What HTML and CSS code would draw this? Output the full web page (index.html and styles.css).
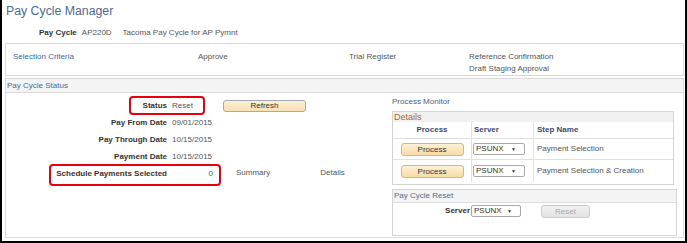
FILE: index.html
```html
<!doctype html>
<html lang="en">
<head>
	<meta charset="utf-8">
	<meta name="viewport" content="width=device-width, initial-scale=1">
	<title>Pay Cycle Manager</title>
	<link rel="stylesheet" href="styles.css">
</head>
<body>
	<div class="frame">

		<h1 class="page-title">Pay Cycle Manager</h1>

		<div class="cycle-line">
			<b class="cycle-label">Pay Cycle</b>
			<span class="cycle-id">AP220D</span>
			<span>Tacoma Pay Cycle for AP Pymnt</span>
		</div>

		<div class="steps">
			<div><a href="#" class="link">Selection Criteria</a></div>
			<div>Approve</div>
			<div>Trial Register</div>
			<div>Reference Confirmation<br>Draft Staging Approval</div>
		</div>

		<section class="status">
			<h2 class="status-head">Pay Cycle Status</h2>
			<div class="status-body">

				<div class="status-left">
					<div class="row">
						<span class="lbl">Status</span>
						<span class="val val-status">Reset</span>
						<button class="btn btn-refresh">Refresh</button>
					</div>
					<div class="row">
						<span class="lbl">Pay From Date</span>
						<span class="val">09/01/2015</span>
					</div>
					<div class="row">
						<span class="lbl">Pay Through Date</span>
						<span class="val">10/15/2015</span>
					</div>
					<div class="row">
						<span class="lbl">Payment Date</span>
						<span class="val">10/15/2015</span>
					</div>
					<div class="row">
						<span class="lbl">Schedule Payments Selected</span>
						<span class="val val-count">0</span>
						<span class="row-link row-summary">Summary</span>
						<span class="row-link row-details">Details</span>
					</div>
				</div>

				<div class="status-right">
					<a href="#" class="monitor">Process Monitor</a>

					<div class="panel details">
						<div class="details-head">Details</div>
						<table class="grid">
							<tr>
								<th class="col-process">Process</th>
								<th class="col-server">Server</th>
								<th class="col-step">Step Name</th>
							</tr>
							<tr>
								<td class="col-process"><button class="btn btn-process">Process</button></td>
								<td class="col-server"><span class="sel">PSUNX<i>&#9660;</i></span></td>
								<td class="col-step">Payment Selection</td>
							</tr>
							<tr class="last">
								<td class="col-process"><button class="btn btn-process">Process</button></td>
								<td class="col-server"><span class="sel">PSUNX<i>&#9660;</i></span></td>
								<td class="col-step">Payment Selection &amp; Creation</td>
							</tr>
						</table>
					</div>

					<div class="panel reset">
						<div class="reset-head">Pay Cycle Reset</div>
						<div class="reset-row">
							<b class="reset-lbl">Server</b>
							<span class="sel sel-reset">PSUNX<i>&#9660;</i></span>
							<button class="btn btn-off" disabled>Reset</button>
						</div>
					</div>
				</div>

			</div>
		</section>

		<!-- red call-outs drawn over the page -->
		<div class="mark mark-status"></div>
		<div class="mark mark-sched"></div>
	</div>
</body>
</html>
```

FILE: styles.css
```css
:root {
	--line: #dadada;
	--label: #333;
	--text: #555;
	--blue: #4d6a94;
	--link: #3a68a3;
	--mark: #e8000d;
}

html, body {
	margin: 0;
	background: #fff;
}
.frame {
	position: relative;
	width: 687px;
	height: 243px;
	box-sizing: border-box;
	border: 2px solid #000;
	border-top: 0;
	padding: 0 1px 0 3px;
	font: 8px/12px "Liberation Sans", Arial, sans-serif;
	color: var(--text);
	overflow: hidden;
}

.page-title {
	margin: 0;
	padding: 4px 0 0 1px;
	font-size: 12.3px;
	line-height: 15px;
	font-weight: normal;
	color: var(--blue);
}

.cycle-line {
	display: flex;
	margin-top: 8px;
	padding-left: 34px;
}
.cycle-label {
	color: var(--label);
	margin-right: 5px;
}
.cycle-id {
	margin-right: 11px;
}

.steps {
	display: grid;
	grid-template-columns: 185px 151px 120px 1fr;
	box-sizing: border-box;
	height: 33px;
	margin-top: 4px;
	padding: 7px 0 0 7px;
	border: 1px solid var(--line);
}
.link {
	color: var(--link);
	text-decoration: none;
}

.status {
	box-sizing: border-box;
	height: 160px;
	margin-top: 2px;
	border: 1px solid var(--line);
}
.status-head {
	margin: 0;
	height: 13px;
	padding-left: 1px;
	font-size: 8px;
	line-height: 13px;
	font-weight: normal;
	color: var(--blue);
	background: #f4f4f4;
	border-bottom: 1px solid var(--line);
}
.status-body {
	display: flex;
}

/* left: label / value rows */
.status-left {
	width: 386px;
	padding-top: 4px;
}
.row {
	display: flex;
	align-items: center;
	height: 17px;
	line-height: 17px;
}
.lbl {
	width: 161px;
	margin-right: 5px;
	text-align: right;
	font-weight: bold;
	color: var(--label);
}
.val-status {
	width: 51px;
}
.val-count {
	width: 41px;
	text-align: right;
}
.row-link {
	position: relative;
	top: -1px;
}
.row-summary {
	margin-left: 23px;
}
.row-details {
	margin-left: 50px;
}

.btn {
	box-sizing: border-box;
	padding: 0;
	font: 8px "Liberation Sans", Arial, sans-serif;
	color: var(--label);
	border-radius: 3px;
	cursor: pointer;
}
.btn-refresh {
	width: 83px;
	height: 12px;
	background: linear-gradient(#fdefd3, #f9e1b4);
	border: 1px solid #a3a9b8;
}
.btn-process {
	width: 63px;
	height: 13px;
	background: linear-gradient(#fdf0d6, #f8dba6);
	border: 1px solid #d9b47c;
}
.btn-off {
	width: 49px;
	height: 13px;
	margin-left: 20px;
	color: #a8a8a8;
	background: linear-gradient(#f1f1f1, #e3e3e3);
	border: 1px solid #cbcbcb;
	cursor: default;
}

/* right: process panels */
.status-right {
	width: 285px;
	padding-top: 3px;
}
.monitor {
	display: block;
	color: #4b5b8b;
	text-decoration: none;
}
.panel {
	box-sizing: border-box;
	border: 1px solid #d4d4d4;
}
.details {
	width: 282px;
	height: 74px;
	margin-top: 3px;
}
.details-head {
	height: 10px;
	padding-left: 1px;
	font-size: 9px;
	line-height: 10px;
	color: #ad6630;
	background: #f1f1f1;
}
.grid {
	width: 100%;
	border-collapse: separate;
	border-spacing: 0;
}
.grid th,
.grid td {
	padding: 0;
	border-bottom: 1px solid #e0e0e0;
	text-align: left;
}
.grid th {
	height: 16px;
	color: #3c4a6e;
	font-weight: bold;
}
.grid td {
	height: 20px;
}
.grid .last td {
	height: 22px;
	border-bottom: 0;
}
.grid .col-process {
	width: 78px;
	text-align: center;
	border-right: 1px solid #e0e0e0;
}
.grid .col-server {
	width: 59px;
	padding-left: 1px;
	border-right: 1px solid #e0e0e0;
}
.grid th.col-server {
	padding-left: 2px;
}
.grid .col-step {
	padding-left: 3px;
}

.sel {
	display: inline-flex;
	align-items: center;
	justify-content: space-between;
	box-sizing: border-box;
	width: 52px;
	height: 12px;
	padding: 0 8px 0 2px;
	vertical-align: middle;
	color: var(--label);
	background: #fff;
	border: 1px solid #a9a9a9;
	border-radius: 2px;
	line-height: 10px;
}
.sel i {
	font-style: normal;
	font-size: 5px;
}
.sel-reset {
	width: 50px;
	margin-left: 1px;
}

.reset {
	height: 47px;
	margin-top: 4px;
}
.reset-head {
	height: 12px;
	padding-left: 1px;
	line-height: 12px;
	color: var(--blue);
	background: #f4f4f4;
	border-bottom: 1px solid #dedede;
}
.reset-row {
	display: flex;
	align-items: center;
	height: 14px;
	padding-top: 1px;
}
.reset-lbl {
	width: 77px;
	text-align: right;
	color: var(--label);
}

/* annotation boxes */
.mark {
	position: absolute;
	box-sizing: border-box;
	border: 2px solid var(--mark);
	border-radius: 4px;
}
.mark-status {
	left: 127px;
	top: 96px;
	width: 76px;
	height: 19px;
}
.mark-sched {
	left: 47px;
	top: 164px;
	width: 172px;
	height: 22px;
}
```
